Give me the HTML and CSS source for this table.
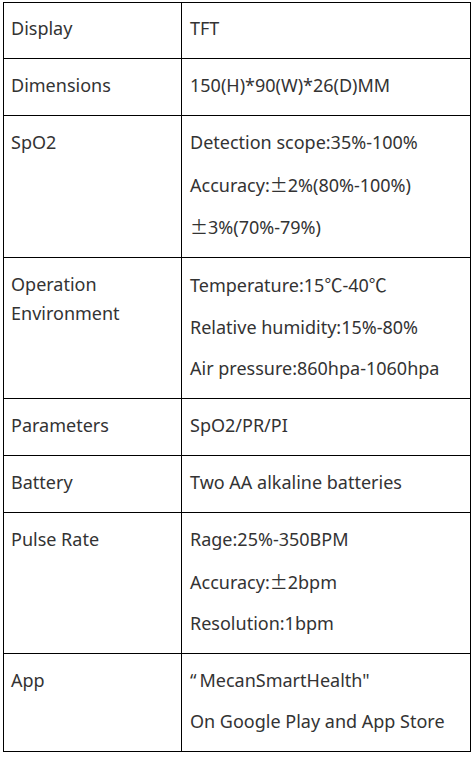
FILE: index.html
```html
<!DOCTYPE html>
<html>
<head>
<meta charset="utf-8">
<link rel="stylesheet" href="styles.css">
</head>
<body>
<table class="spec">
  <colgroup><col class="c1"><col class="c2"></colgroup>
  <tr class="first"><td><p>Display</p></td><td><p>TFT</p></td></tr>
  <tr><td><p>Dimensions</p></td><td><p>150(H)*90(W)*26(D)MM</p></td></tr>
  <tr><td><p>SpO2</p></td><td><p>Detection scope:35%-100%</p><p>Accuracy:<span class="cjk">±</span>2%(80%-100%)</p><p><span class="cjk">±</span>3%(70%-79%)</p></td></tr>
  <tr><td><p>Operation Environment</p></td><td><p>Temperature:15<span class="cjk">℃</span>-40<span class="cjk">℃</span></p><p>Relative humidity:15%-80%</p><p>Air pressure:860hpa-1060hpa</p></td></tr>
  <tr><td><p>Parameters</p></td><td><p>SpO2/PR/PI</p></td></tr>
  <tr><td><p>Battery</p></td><td><p>Two AA alkaline batteries</p></td></tr>
  <tr><td><p>Pulse Rate</p></td><td><p>Rage:25%-350BPM</p><p>Accuracy:<span class="cjk">±</span>2bpm</p><p>Resolution:1bpm</p></td></tr>
  <tr class="app"><td><p>App</p></td><td><p><span class="q">“</span>MecanSmartHealth"</p><p>On Google Play and App Store</p></td></tr>
</table>
</body>
</html>
```
FILE: styles.css
```css
html, body { margin: 0; padding: 0; background: #fff; }
body { padding: 2px 3px; font-family: "Noto Sans", "Noto Sans CJK SC", sans-serif; font-size: 18px; color: #333; }
.spec { border-collapse: collapse; width: 467px; table-layout: fixed; }
.c1 { width: 178px; }
.c2 { width: 289px; }
.spec td { border: 1.5px solid #000; vertical-align: top; padding: 12px 7px 15px 7px; }
.spec td:last-child { padding-left: 8px; }
.spec .first td { padding-top: 11px; }
.spec p { margin: 0; line-height: 29px; }
.spec p + p { margin-top: 12.5px; }
.spec .app p + p { margin-top: 12px; }
.spec .app td { padding-bottom: 15px; }
.cjk { font-family: "Noto Sans CJK SC", sans-serif; }
.q { margin-right: 3px; }
```
